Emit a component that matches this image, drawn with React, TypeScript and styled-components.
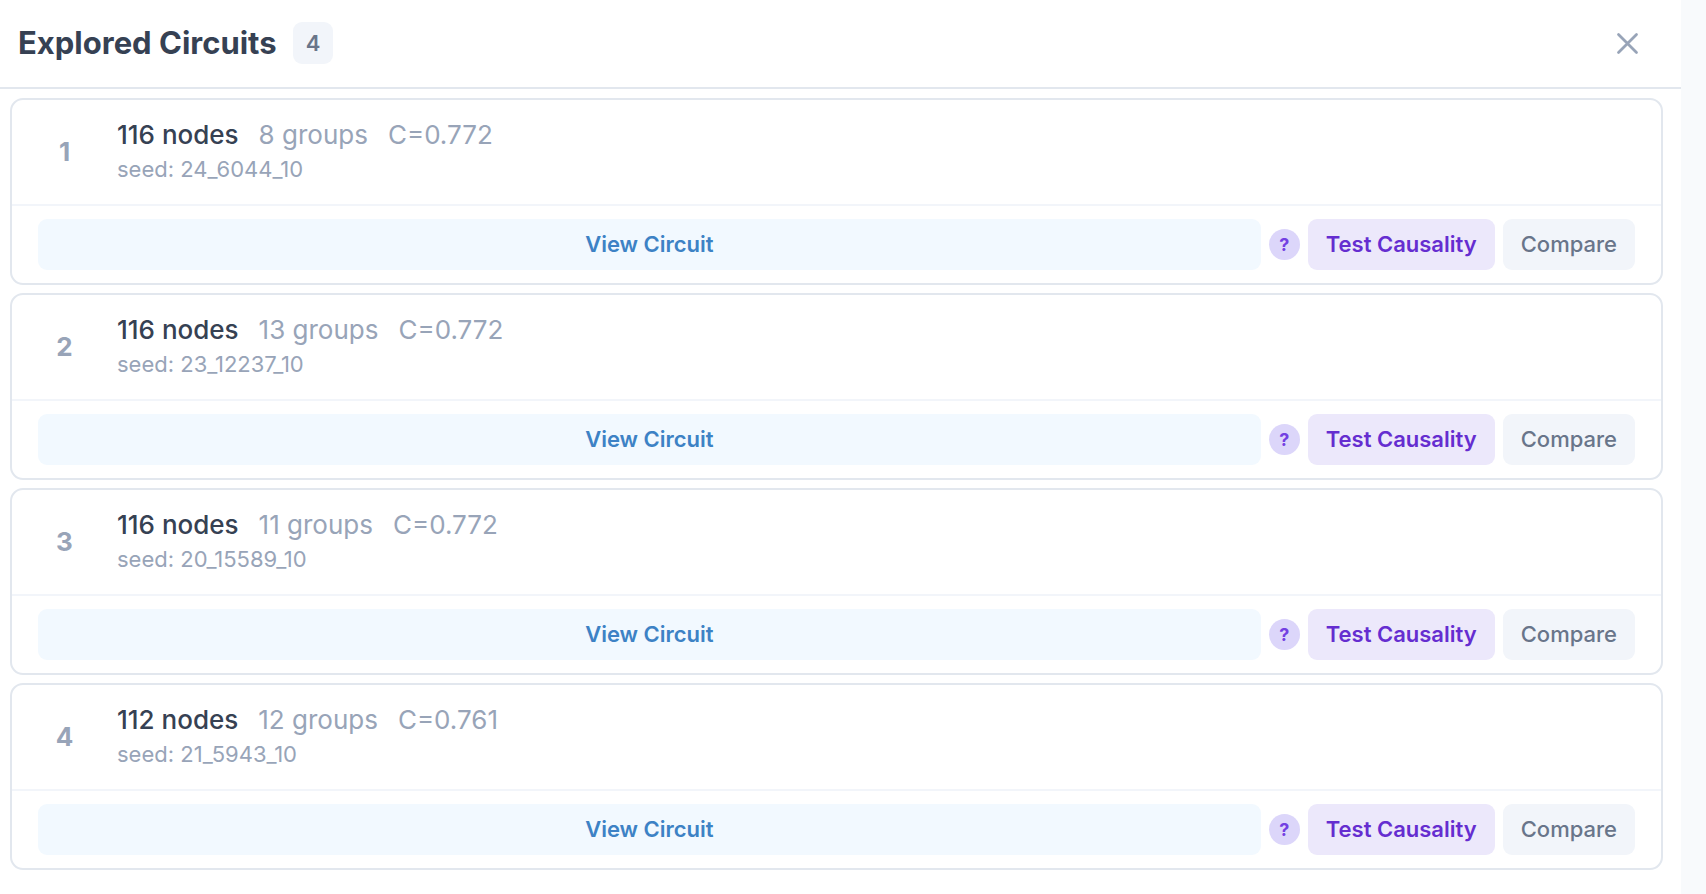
import React from "react";
import styled, { createGlobalStyle, css } from "styled-components";

const GlobalStyle = createGlobalStyle`
  *, *::before, *::after { box-sizing: border-box; }
  body {
    margin: 0;
    background: #f8fafc;
    font-family: Inter, "Liberation Sans", sans-serif;
    color: #364153;
  }
  button { font-family: inherit; }
`;

const Panel = styled.main`
  min-height: 100vh;
  margin-right: 25px;
  background: #ffffff;
`;

const PanelHeader = styled.header`
  display: flex;
  align-items: center;
  gap: 16px;
  padding: 22px 40px 23px 18px;
  border-bottom: 2px solid #e2e7ee;
`;

const Title = styled.h1`
  margin: 0;
  font-size: 31px;
  line-height: 42px;
  font-weight: 700;
`;

const CountBadge = styled.span`
  padding: 0 13px;
  border-radius: 9px;
  background: #f2f5fa;
  color: #69758a;
  font-size: 22px;
  line-height: 42px;
  font-weight: 600;
`;

const CloseButton = styled.button`
  display: flex;
  margin-left: auto;
  padding: 0;
  border: 0;
  background: none;
  color: #98a4b8;
  cursor: pointer;
`;

const CircuitList = styled.ol`
  display: flex;
  flex-direction: column;
  gap: 8px;
  margin: 0;
  padding: 9px 18px 24px 10px;
  list-style: none;
`;

const Card = styled.li`
  border: 2px solid #e2e7ee;
  border-radius: 13px;
  background: #ffffff;
`;

const CardBody = styled.div`
  display: flex;
  align-items: center;
  gap: 26px;
  padding: 18px 26px;
`;

const Rank = styled.span`
  width: 53px;
  color: #98a4b8;
  font-size: 26px;
  line-height: 34px;
  font-weight: 700;
  text-align: center;
`;

const Stats = styled.div`
  display: flex;
  gap: 20px;
  font-size: 26px;
  line-height: 34px;
  color: #98a4b8;
`;

const NodeCount = styled.span`
  color: #364153;
  font-weight: 500;
`;

const Seed = styled.div`
  color: #98a4b8;
  font-size: 22px;
  line-height: 34px;
`;

const Actions = styled.div`
  display: flex;
  align-items: center;
  gap: 8px;
  padding: 13px 26px;
  border-top: 2px solid #f2f5fa;
`;

const tones = {
  view: css`
    flex: 1;
    background: #f2f9ff;
    color: #3d82c5;
    font-weight: 600;
  `,
  test: css`
    background: #ece8fb;
    color: #652dd0;
    font-weight: 600;
  `,
  compare: css`
    background: #f2f5fa;
    color: #69758a;
    font-weight: 500;
  `,
};

const ActionButton = styled.button<{ $tone: keyof typeof tones }>`
  padding: 0 18px;
  border: 0;
  border-radius: 9px;
  font-size: 22px;
  line-height: 51px;
  cursor: pointer;
  ${({ $tone }) => tones[$tone]}
`;

const HelpButton = styled.button`
  width: 31px;
  height: 31px;
  padding: 0;
  border: 0;
  border-radius: 50%;
  background: #dcd6fa;
  color: #7340e2;
  font-size: 18px;
  line-height: 31px;
  font-weight: 700;
  cursor: help;
`;

const circuits = [
  { nodes: 116, groups: 8, c: "0.772", seed: "24_6044_10" },
  { nodes: 116, groups: 13, c: "0.772", seed: "23_12237_10" },
  { nodes: 116, groups: 11, c: "0.772", seed: "20_15589_10" },
  { nodes: 112, groups: 12, c: "0.761", seed: "21_5943_10" },
];

export default function App() {
  return (
    <>
      <GlobalStyle />
      <Panel>
        <PanelHeader>
          <Title>Explored Circuits</Title>
          <CountBadge>{circuits.length}</CountBadge>
          <CloseButton type="button" aria-label="Close">
            <svg width="27" height="27" viewBox="0 0 27 27" fill="none" stroke="currentColor" strokeWidth="2.75" strokeLinecap="round">
              <path d="M4.5 4.5 22.5 22.5M22.5 4.5 4.5 22.5" />
            </svg>
          </CloseButton>
        </PanelHeader>
        <CircuitList>
          {circuits.map((circuit, index) => (
            <Card key={circuit.seed}>
              <CardBody>
                <Rank>{index + 1}</Rank>
                <div>
                  <Stats>
                    <NodeCount>{circuit.nodes} nodes</NodeCount>
                    <span>{circuit.groups} groups</span>
                    <span>C={circuit.c}</span>
                  </Stats>
                  <Seed>seed: {circuit.seed}</Seed>
                </div>
              </CardBody>
              <Actions>
                <ActionButton type="button" $tone="view">View Circuit</ActionButton>
                <HelpButton type="button" aria-label="About causality testing">?</HelpButton>
                <ActionButton type="button" $tone="test">Test Causality</ActionButton>
                <ActionButton type="button" $tone="compare">Compare</ActionButton>
              </Actions>
            </Card>
          ))}
        </CircuitList>
      </Panel>
    </>
  );
}
